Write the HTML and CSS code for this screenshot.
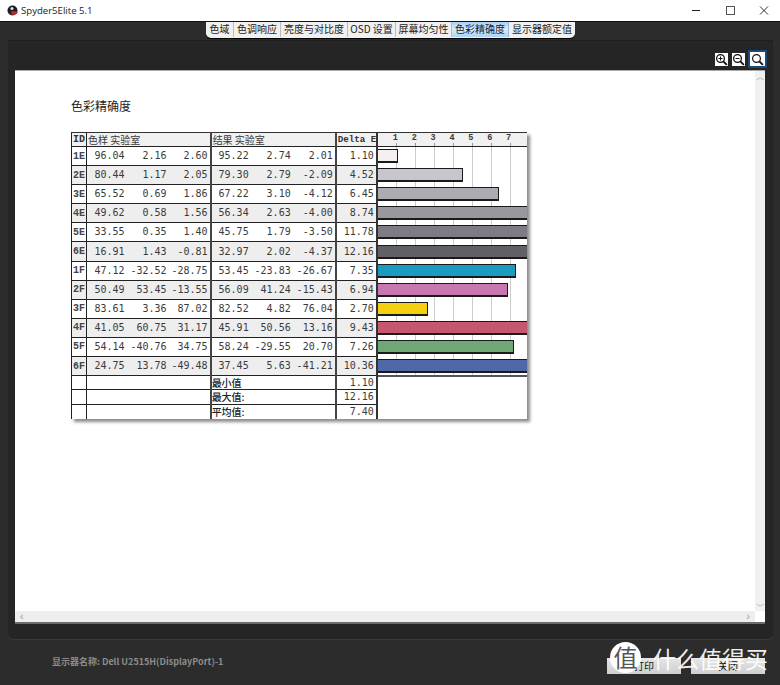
FILE: index.html
```html
<!DOCTYPE html>
<html lang="zh">
<head>
<meta charset="utf-8">
<title>Spyder5Elite 5.1</title>
<link rel="stylesheet" href="styles.css">
</head>
<body>
<div class="window">
  <header class="titlebar">
    <svg class="app-icon" width="11" height="11" viewBox="0 0 11 11"><circle cx="5.5" cy="5.5" r="5" fill="#1c1c1c"/><path d="M4 6.2h6.5v1.5a4 3 0 0 1-6 1.5z" fill="#c8242c"/><circle cx="5" cy="3.5" r="1.6" fill="#ddd"/></svg>
    <span class="app-title">Spyder5Elite 5.1</span>
    <div class="controls">
      <svg width="10" height="10" viewBox="0 0 10 10"><path d="M1 4.5h8" stroke="#222"/></svg>
      <svg width="10" height="10" viewBox="0 0 10 10"><rect x="1.5" y="0.5" width="8" height="8" fill="none" stroke="#555"/></svg>
      <svg width="10" height="10" viewBox="0 0 10 10"><path d="M1 .5l8 8M9 .5l-8 8" stroke="#333"/></svg>
    </div>
  </header>
  <nav class="tabs">
    <span class="tab t1">色域</span><span class="tab t2">色调响应</span><span class="tab t3">亮度与对比度</span><span class="tab t4">OSD 设置</span><span class="tab t5">屏幕均匀性</span><span class="tab t6 active">色彩精确度</span><span class="tab t7">显示器额定值</span>
  </nav>
  <main class="panel">
    <div class="zoombar">
      <button class="zoom"><svg width="13" height="13" viewBox="0 0 13 13"><circle cx="5.5" cy="5.5" r="3.9" fill="none" stroke="#111" stroke-width="1.3"/><path d="M8.3 8.3l3.6 3.6" stroke="#111" stroke-width="1.9"/><path d="M3.5 5.5h4M5.5 3.5v4" stroke="#111"/></svg></button>
      <button class="zoom"><svg width="13" height="13" viewBox="0 0 13 13"><circle cx="5.5" cy="5.5" r="3.9" fill="none" stroke="#111" stroke-width="1.3"/><path d="M8.3 8.3l3.6 3.6" stroke="#111" stroke-width="1.9"/><path d="M3.5 5.5h4" stroke="#111"/></svg></button>
      <button class="zoom on"><svg width="13" height="13" viewBox="0 0 13 13"><circle cx="5.5" cy="5.5" r="3.9" fill="none" stroke="#111" stroke-width="1.2"/><path d="M8.3 8.3l3.6 3.6" stroke="#111" stroke-width="1.9"/></svg></button>
    </div>
    <div class="viewport">
      <div class="scrollarea">
        <section class="report">
          <h1 class="report-title">色彩精确度</h1>
          <table class="data">
            <colgroup><col class="c-id"><col class="c-n"><col class="c-n"><col class="c-n1"><col class="c-n"><col class="c-n"><col class="c-n2"><col class="c-d"><col class="c-chart"></colgroup>
            <thead><tr>
              <th class="id">ID</th><th colspan="3" class="grp">色样 实验室</th><th colspan="3" class="grp">结果 实验室</th><th class="delta">Delta E</th>
              <th class="axis"><div class="axis-in"><span>1</span><span>2</span><span>3</span><span>4</span><span>5</span><span>6</span><span>7</span></div></th>
            </tr></thead>
            <tbody>
              <tr><td class="id">1E</td><td class="f">96.04</td><td>2.16</td><td class="e">2.60</td><td class="f">95.22</td><td>2.74</td><td class="e">2.01</td><td class="d">1.10</td><td class="chart"><div class="bar" style="width:20px;background:#f6efef"></div></td></tr>
              <tr class="alt"><td class="id">2E</td><td class="f">80.44</td><td>1.17</td><td class="e">2.05</td><td class="f">79.30</td><td>2.79</td><td class="e">-2.09</td><td class="d">4.52</td><td class="chart"><div class="bar" style="width:85px;background:#c9c5cc"></div></td></tr>
              <tr><td class="id">3E</td><td class="f">65.52</td><td>0.69</td><td class="e">1.86</td><td class="f">67.22</td><td>3.10</td><td class="e">-4.12</td><td class="d">6.45</td><td class="chart"><div class="bar" style="width:121px;background:#aeaab2"></div></td></tr>
              <tr class="alt"><td class="id">4E</td><td class="f">49.62</td><td>0.58</td><td class="e">1.56</td><td class="f">56.34</td><td>2.63</td><td class="e">-4.00</td><td class="d">8.74</td><td class="chart"><div class="bar" style="width:165px;background:#9b979e"></div></td></tr>
              <tr><td class="id">5E</td><td class="f">33.55</td><td>0.35</td><td class="e">1.40</td><td class="f">45.75</td><td>1.79</td><td class="e">-3.50</td><td class="d">11.78</td><td class="chart"><div class="bar" style="width:222px;background:#7e7c82"></div></td></tr>
              <tr class="alt"><td class="id">6E</td><td class="f">16.91</td><td>1.43</td><td class="e">-0.81</td><td class="f">32.97</td><td>2.02</td><td class="e">-4.37</td><td class="d">12.16</td><td class="chart"><div class="bar" style="width:230px;background:#626066"></div></td></tr>
              <tr><td class="id">1F</td><td class="f">47.12</td><td>-32.52</td><td class="e">-28.75</td><td class="f">53.45</td><td>-23.83</td><td class="e">-26.67</td><td class="d">7.35</td><td class="chart"><div class="bar" style="width:138px;background:#1b9bc0"></div></td></tr>
              <tr class="alt"><td class="id">2F</td><td class="f">50.49</td><td>53.45</td><td class="e">-13.55</td><td class="f">56.09</td><td>41.24</td><td class="e">-15.43</td><td class="d">6.94</td><td class="chart"><div class="bar" style="width:130px;background:#c878b0"></div></td></tr>
              <tr><td class="id">3F</td><td class="f">83.61</td><td>3.36</td><td class="e">87.02</td><td class="f">82.52</td><td>4.82</td><td class="e">76.04</td><td class="d">2.70</td><td class="chart"><div class="bar" style="width:50px;background:#f5d010"></div></td></tr>
              <tr class="alt"><td class="id">4F</td><td class="f">41.05</td><td>60.75</td><td class="e">31.17</td><td class="f">45.91</td><td>50.56</td><td class="e">13.16</td><td class="d">9.43</td><td class="chart"><div class="bar" style="width:178px;background:#c5586f"></div></td></tr>
              <tr><td class="id">5F</td><td class="f">54.14</td><td>-40.76</td><td class="e">34.75</td><td class="f">58.24</td><td>-29.55</td><td class="e">20.70</td><td class="d">7.26</td><td class="chart"><div class="bar" style="width:136px;background:#6fa874"></div></td></tr>
              <tr class="alt"><td class="id">6F</td><td class="f">24.75</td><td>13.78</td><td class="e">-49.48</td><td class="f">37.45</td><td>5.63</td><td class="e">-41.21</td><td class="d">10.36</td><td class="chart"><div class="bar" style="width:196px;background:#5068a8"></div></td></tr>
              <tr class="sum"><td class="id"></td><td colspan="3" class="e"></td><td colspan="3" class="e lbl">最小值</td><td class="d">1.10</td><td rowspan="3" class="blank"></td></tr>
              <tr class="sum"><td class="id"></td><td colspan="3" class="e"></td><td colspan="3" class="e lbl">最大值:</td><td class="d">12.16</td></tr>
              <tr class="sum last"><td class="id"></td><td colspan="3" class="e"></td><td colspan="3" class="e lbl">平均值:</td><td class="d">7.40</td></tr>
            </tbody>
          </table>
        </section>
      </div>
      <div class="vscroll"><span class="arrow">︿</span><span class="arrow">﹀</span></div>
      <div class="hscroll"><span class="harrow">‹</span><span class="harrow">›</span></div>
      <div class="corner"></div>
    </div>
  </main>
  <footer class="footer">
    <span class="monitor">显示器名称: Dell U2515H(DisplayPort)-1</span>
    <div class="actions"><button class="act">打印</button><button class="act">关闭</button></div>
  </footer>
</div>
<div class="watermark"><span class="wm-badge">值</span><span class="wm-text">什么值得买</span></div>
</body>
</html>
```
FILE: styles.css
```css
* { box-sizing: border-box; }
html, body { margin: 0; padding: 0; }
body { width: 780px; height: 685px; overflow: hidden; position: relative; font-family: "Noto Sans CJK SC", "Noto Sans", sans-serif; }
.window { width: 780px; height: 685px; display: flex; flex-direction: column; background: #2c2c2c; }
.titlebar { height: 22px; flex: none; background: #fff; display: flex; align-items: center; padding-left: 7px; border-bottom: 1px solid #111; }
.app-icon { flex: none; margin-top: -1px; }
.app-title { margin-left: 3px; font: 9.6px "Open Sans", "Noto Sans", sans-serif; color: #222; }
.controls { margin-left: auto; display: flex; gap: 24px; padding-right: 11px; }
.tabs { align-self: flex-start; margin-left: 206px; height: 16px; display: flex; background: #f2f2f2; border-radius: 0 0 5px 5px; box-shadow: 0 1px 0 #000; flex: none; }
.tab { display: block; height: 15px; font-size: 10px; line-height: 14px; color: #222; text-align: center; white-space: nowrap; border-right: 1px solid #bbb; background: #f0f0f0; }
.tab:last-child { border-right: 0; border-radius: 0 0 5px 0; }
.tab:first-child { border-radius: 0 0 0 5px; }
.t1 { width: 28px; } .t2 { width: 47px; } .t3 { width: 67px; } .t4 { width: 48px; } .t5 { width: 56px; } .t6 { width: 57px; } .t7 { width: 66px; }
.active { background: linear-gradient(#a9d3f5, #d8ecfb 50%, #a9d3f5); border-right: 1px solid #8fb8da; }
.panel { margin: 2px 7px 0 8px; height: 599px; flex: none; background: #252525; border-radius: 0 0 5px 5px; box-shadow: 0 1px 0 #3a3a3a; border-top: 1px solid #1f1f1f; padding: 0 5px 0 7px; display: flex; flex-direction: column; }
.zoombar { height: 29px; flex: none; display: flex; justify-content: flex-end; align-items: flex-start; gap: 4px; padding: 12px 1px 0 0; }
.zoom { width: 13px; height: 13px; padding: 0; background: #fff; border: 0; display: flex; align-items: center; justify-content: center; }
.zoom.on { width: 19px; height: 18px; border: 2px solid #1a4a75; margin: -3px 0 0 -1px; }
.viewport { width: 750px; height: 554px; position: relative; background: #fff; border-top: 1px solid #aaa; border-bottom: 2px solid #6a6a6a; overflow: hidden; }
.scrollarea { width: 740px; height: 541px; background: #fff; overflow: hidden; }
.report { padding: 26px 0 0 56px; }
.report-title { margin: 0 0 18px; font-size: 12px; font-weight: 400; line-height: 17px; color: #222; }
.data { border-collapse: collapse; table-layout: fixed; width: 456px; font: 10px "DejaVu Sans Mono", "Liberation Mono", monospace; color: #3a3a3a; box-shadow: 3px 3px 3px #8c8c8c; background: #fff; }
.c-id { width: 15px; } .c-n { width: 41px; } .c-n1 { width: 42px; } .c-n2 { width: 43px; } .c-d { width: 41px; } .c-chart { width: 150px; }
.data th { height: 14px; padding: 0 2px; background: #f0f0f0; font-weight: 400; text-align: left; border-top: 1px solid #333; border-bottom: 1px solid #222; border-right: 1px solid #222; line-height: 12px; }
.data th.id { font: 700 10px "Liberation Mono", monospace; padding: 0 1px; border-left: 1px solid #222; color: #333; }
.data th.grp { font-family: "Noto Sans CJK SC", sans-serif; font-size: 10px; padding-left: 1px; border-right: 2px solid #444; }
.data th.delta { font: 700 9.2px "Liberation Mono", monospace; padding: 0 0 0 1px; border-right: 2px solid #333; white-space: nowrap; color: #333; }
.data th.axis { padding: 0; border-right: 0; background: #f0f0f0; }
.axis-in { height: 13px; width: 150px; padding-left: 15px; display: flex; font: 700 8.5px "Liberation Mono", monospace; background: repeating-linear-gradient(90deg, transparent 0 18px, #999 18px 19px) 0 10px / 100% 3px no-repeat; }
.axis-in span { width: 18.9px; text-align: left; line-height: 10px; }
.data td { height: 19.1px; padding: 0 2px 0 0; text-align: right; white-space: nowrap; line-height: 12px; border-bottom: 1px solid #222; }
.data td.f { padding-right: 3px; }
.data td.id { text-align: left; padding: 0 0 0 1px; font: 700 10px "Liberation Mono", monospace; color: #444; border-left: 1px solid #222; border-right: 1px solid #222; }
.data td.e { border-right: 2px solid #444; }
.data td.d { border-right: 2px solid #333; }
.data tr.alt td { background: #eee; }
.data td.chart { padding: 0; border-bottom: 0; overflow: hidden; vertical-align: middle; background: repeating-linear-gradient(90deg, #fff 0 18px, #ccc 18px 19px) !important; }
.data tr:nth-child(12) td.chart { border-bottom: 2px solid #555; }
.bar { height: 14px; border: 1px solid #1a1a1a; border-bottom-width: 2px; border-left: 0; max-width: 150px; }
.data tr.sum td { height: 14.3px; line-height: 12px; }
.data tr.last td { border-bottom: 0; }
.data td.lbl { text-align: left; padding-left: 0; font: 500 10px "Noto Sans CJK SC", sans-serif; color: #222; }
.data td.blank { border-bottom: 0; background: #fff; }
.vscroll { position: absolute; right: 0; top: 0; width: 10px; height: 541px; background: #f0f0f0; display: flex; flex-direction: column; justify-content: space-between; align-items: center; }
.arrow { font-size: 7px; line-height: 10px; color: #999; }
.hscroll { position: absolute; left: 0; bottom: 0; width: 740px; height: 11px; background: #eee; display: flex; justify-content: space-between; padding: 0 5px; }
.harrow { font: 11px/10px "Liberation Sans", sans-serif; color: #999; }
.corner { position: absolute; right: 0; bottom: 0; width: 10px; height: 11px; background: #fff; }
.footer { flex: 1; display: flex; align-items: center; padding: 0 15px 0 52px; }
.monitor { font: 700 9px "Noto Sans CJK SC", "Noto Sans", sans-serif; color: #8c8c8c; margin-top: -1px; }
.actions { margin-left: auto; display: flex; gap: 10px; margin-top: 7px; }
.act { width: 74px; height: 16px; padding: 0; border: 0; background: linear-gradient(#e6e6e6, #cfcfcf); font: 10px/16px "Noto Sans CJK SC", sans-serif; color: #111; }
.watermark { position: absolute; left: 610px; top: 642px; display: flex; align-items: center; color: #fff; }
.wm-badge { width: 31px; height: 31px; border-radius: 50%; background: #fff; color: #555; font-size: 24px; line-height: 29px; text-align: center; }
.wm-text { margin-left: 12px; font-size: 23px; line-height: 30px; opacity: .92; }
```
